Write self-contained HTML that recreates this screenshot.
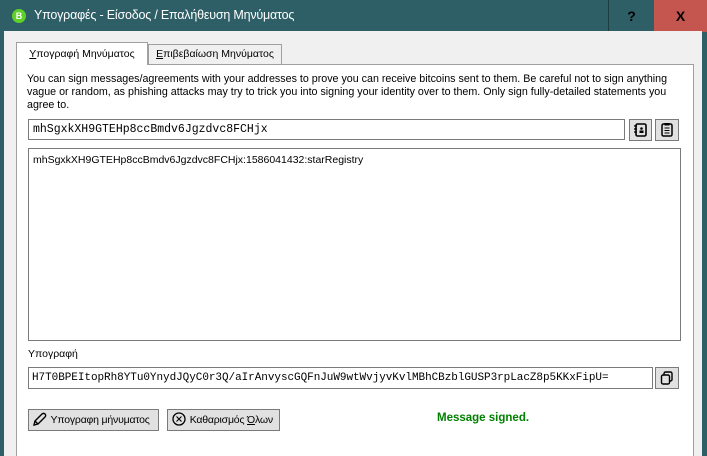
<!DOCTYPE html>
<html><head><meta charset="utf-8"><style>
*{box-sizing:border-box;margin:0;padding:0}
html{overflow:hidden;background:#f0f0f0}
body{width:707px;height:456px;overflow:hidden;background:#2f5f66;font-family:"Liberation Sans","DejaVu Sans",sans-serif;font-size:11px;color:#000;position:relative}
.abs{position:absolute}
.title{left:34px;top:8px;color:#fff;font-size:12.5px;letter-spacing:-0.2px}
.help{left:608px;top:0;width:46px;height:32px;border-left:1px solid #1d3d42;color:#000;font-weight:bold;font-size:14px;text-align:center;line-height:32px}
.close{left:654px;top:0;width:53px;height:32px;background:#c4554f;color:#000;font-weight:bold;font-size:14px;text-align:center;line-height:32px}
.body{left:4px;top:31px;width:698px;height:440px;background:#f0f0f0}
.pane{left:16px;top:64px;width:678px;height:410px;background:#fff;border:1px solid #a0a0a0}
.tab1{left:16px;top:42px;width:132px;height:23px;background:#fff;border:1px solid #a0a0a0;border-bottom:none;text-align:center;line-height:22px;font-size:10.5px}
.tab2{left:148px;top:44px;width:134px;height:20px;background:#f0f0f0;border:1px solid #a0a0a0;border-bottom:none;text-align:center;line-height:19px;font-size:10.5px}
.desc{left:27px;top:73px;width:662px;line-height:13px;font-size:10.7px}
.inp{background:#fff;border:1px solid #7a7a7a;font-family:"Liberation Mono",monospace;font-size:11.5px;padding:0 4px;line-height:19px;white-space:nowrap;overflow:hidden}
.btn{background:#e1e1e1;border:1px solid #7a7a7a}
.ta{left:28px;top:148px;width:653px;height:193px;background:#fff;border:1px solid #7a7a7a;padding:5px 4px;font-size:10.5px}
.pb{height:22px;line-height:20px;padding-left:3px;font-size:10.5px;white-space:nowrap;overflow:hidden;letter-spacing:-0.2px}
</style></head><body>
<div class="abs" style="left:12px;top:9px;width:14px;height:14px;border-radius:50%;background:#5fd12a;color:#fff;font-size:9px;text-align:center;line-height:14px;font-weight:bold">B</div>
<div class="abs title">Υπογραφές - Είσοδος / Επαλήθευση Μηνύματος</div>
<div class="abs help">?</div>
<div class="abs close">X</div>
<div class="abs body"></div>
<div class="abs pane"></div>
<div class="abs tab2"><u>Ε</u>πιβεβαίωση Μηνύματος</div>
<div class="abs tab1"><u>Υ</u>πογραφή Μηνύματος</div>
<div class="abs desc">You can sign messages/agreements with your addresses to prove you can receive bitcoins sent to them. Be careful not to sign anything vague or random, as phishing attacks may try to trick you into signing your identity over to them. Only sign fully-detailed statements you agree to.</div>
<div class="abs inp" style="left:28px;top:119px;width:597px;height:21px">mhSgxkXH9GTEHp8ccBmdv6Jgzdvc8FCHjx</div>
<div class="abs btn" style="left:629px;top:119px;width:23px;height:22px"><svg width="21" height="20" viewBox="0 0 21 20"><rect x="6" y="4" width="10" height="12" rx="1.5" fill="none" stroke="#000" stroke-width="1.6"/><path d="M4 6h3M4 9h3M4 12h3" stroke="#000" stroke-width="1.2"/><circle cx="11.5" cy="8.5" r="1.3"/><rect x="9.5" y="10.5" width="4" height="2.5"/></svg></div>
<div class="abs btn" style="left:655px;top:119px;width:24px;height:22px"><svg width="22" height="20" viewBox="0 0 22 20"><rect x="6" y="4" width="10" height="12" rx="1.5" fill="none" stroke="#000" stroke-width="1.5"/><rect x="8.5" y="3" width="5" height="2.5" fill="#000"/><path d="M8.5 8h5M8.5 10.5h5M8.5 13h5" stroke="#000" stroke-width="1"/></svg></div>
<div class="abs ta">mhSgxkXH9GTEHp8ccBmdv6Jgzdvc8FCHjx:1586041432:starRegistry</div>
<div class="abs" style="left:28px;top:348px;font-size:10.5px">Υπογραφή</div>
<div class="abs inp" style="left:28px;top:367px;width:625px;height:22px;line-height:20px;font-size:11px;letter-spacing:-0.05px;padding:0 3px">H7T0BPEItopRh8YTu0YnydJQyC0r3Q/aIrAnvyscGQFnJuW9wtWvjyvKvlMBhCBzblGUSP3rpLacZ8p5KKxFipU=</div>
<div class="abs btn" style="left:655px;top:367px;width:24px;height:22px"><svg width="22" height="20" viewBox="0 0 22 20"><rect x="8" y="4" width="8" height="9" rx="1.5" fill="none" stroke="#000" stroke-width="1.4"/><rect x="5.5" y="7" width="8" height="9" rx="1.5" fill="#e1e1e1" stroke="#000" stroke-width="1.4"/></svg></div>
<div class="abs btn pb" style="left:28px;top:409px;width:131px"><svg width="16" height="14" viewBox="0 0 16 14" style="vertical-align:-3px"><path d="M2 13l1-4 7-7a1.5 1.5 0 0 1 3 3l-7 7z M3 9l3 3" fill="none" stroke="#000" stroke-width="1.4"/></svg> Υπογραφη μήνυματος</div>
<div class="abs btn pb" style="left:167px;top:409px;width:113px"><svg width="16" height="16" viewBox="0 0 16 16" style="vertical-align:-4px"><circle cx="8" cy="8" r="6" fill="none" stroke="#000" stroke-width="1.3"/><path d="M5.5 5.5l5 5M10.5 5.5l-5 5" stroke="#000" stroke-width="1.1"/></svg> Καθαρισμός <u>Ό</u>λων</div>
<div class="abs" style="left:437px;top:412px;color:#008000;font-weight:bold;font-size:11.5px">Message signed.</div>
</body></html>
